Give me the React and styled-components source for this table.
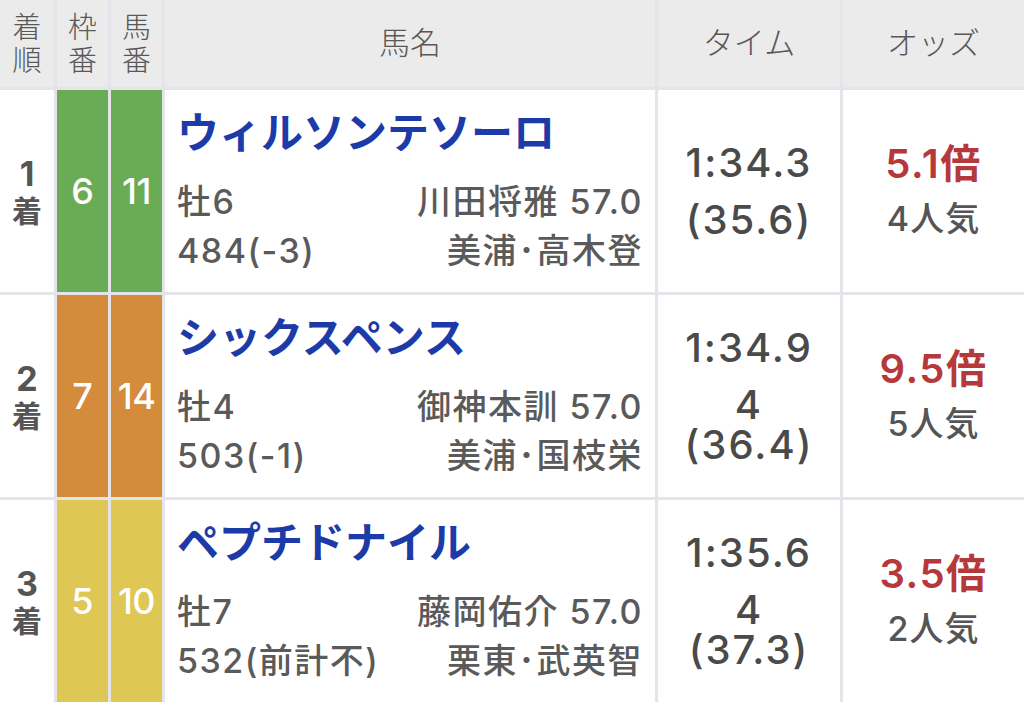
import React from "react";
import styled, { createGlobalStyle } from "styled-components";

const Global = createGlobalStyle`
  html, body { margin: 0; padding: 0; background: #fff; }
  body {
    width: 1024px;
    height: 702px;
    overflow: hidden;
    font-family: "Inter", "Noto Sans CJK JP", sans-serif;
    -webkit-font-smoothing: antialiased;
  }
`;

const Table = styled.div`
  display: grid;
  grid-template-columns: 54px 51px 51px 490px 182px 181px;
  grid-template-rows: 87px;
  grid-auto-rows: 202px;
  gap: 3px;
  background: #e4e4ea;
  width: 1024px;
`;

const HeadCell = styled.div`
  background: #ebebeb;
  color: #585858;
  font-family: "Noto Sans CJK JP", sans-serif;
  font-weight: 300;
  font-size: ${(p) => (p.$stack ? "29px" : "31px")};
  display: flex;
  flex-direction: column;
  align-items: center;
  justify-content: center;
  padding-bottom: ${(p) => (p.$stack ? "3px" : "7px")};
  line-height: ${(p) => (p.$stack ? "33px" : "1")};
  box-sizing: border-box;
`;

const HeadChar = styled.div`
  height: 33px;
  line-height: 33px;
  overflow: visible;
`;

const Cell = styled.div`
  background: #fff;
  display: flex;
  flex-direction: column;
  align-items: center;
  justify-content: center;
  box-sizing: border-box;
`;

const RankCell = styled(Cell)`
  color: #555;
`;

const RankNum = styled.div`
  font-family: "Inter", sans-serif;
  font-weight: 700;
  font-size: 34px;
  line-height: 36px;
  height: 36px;
`;

const RankSuffix = styled.div`
  font-family: "Noto Sans CJK JP", sans-serif;
  font-weight: 700;
  font-size: 30px;
  line-height: 34px;
  height: 34px;
`;

const FrameCell = styled(Cell)`
  background: ${(p) => p.$bg};
  color: #fff;
  font-size: 36px;
  font-weight: 500;
  letter-spacing: ${(p) => (p.$tight ? "-0.5px" : "0")};
`;

const NameCell = styled.div`
  background: #fff;
  padding: 10px 12px 0 12px;
  box-sizing: border-box;
  display: flex;
  flex-direction: column;
`;

const HorseName = styled.div`
  font-family: "Noto Sans CJK JP", sans-serif;
  font-weight: 700;
  font-size: 42px;
  line-height: 60px;
  color: #1c3aa8;
  white-space: nowrap;
`;

const InfoBlock = styled.div`
  margin-top: 17px;
  color: #5a5a5a;
  font-size: 34px;
  font-weight: 500;
  line-height: 49px;
  letter-spacing: 1.5px;
`;

const InfoLine = styled.div`
  display: flex;
  justify-content: space-between;
  white-space: nowrap;
`;

const TimeCell = styled(Cell)`
  color: #4a4a4a;
  font-size: 40px;
  font-weight: 500;
  line-height: 40px;
  letter-spacing: 2px;
`;

const TimeMain = styled.div``;

const TimeSub = styled.div`
  margin-top: 17px;
  text-align: center;
`;

const OddsCell = styled(Cell)`
  line-height: 55px;
`;

const Odds = styled.div`
  color: #b7383a;
  font-weight: 600;
  font-size: 40px;
  letter-spacing: 1.5px;
`;

const Pop = styled.div`
  color: #555;
  font-size: 34px;
  font-weight: 500;
  letter-spacing: 1px;
`;

const rows = [
  {
    rank: "1",
    frame: "6",
    num: "11",
    color: "#6aac56",
    name: "ウィルソンテソーロ",
    sex: "牡6",
    jockey: "川田将雅 57.0",
    weight: "484(-3)",
    trainer: "美浦･高木登",
    time: "1:34.3",
    sub: ["(35.6)"],
    odds: "5.1倍",
    pop: "4人気",
  },
  {
    rank: "2",
    frame: "7",
    num: "14",
    color: "#d58b3c",
    name: "シックスペンス",
    sex: "牡4",
    jockey: "御神本訓 57.0",
    weight: "503(-1)",
    trainer: "美浦･国枝栄",
    time: "1:34.9",
    sub: ["4", "(36.4)"],
    odds: "9.5倍",
    pop: "5人気",
  },
  {
    rank: "3",
    frame: "5",
    num: "10",
    color: "#dec755",
    name: "ペプチドナイル",
    sex: "牡7",
    jockey: "藤岡佑介 57.0",
    weight: "532(前計不)",
    trainer: "栗東･武英智",
    time: "1:35.6",
    sub: ["4", "(37.3)"],
    odds: "3.5倍",
    pop: "2人気",
  },
];

export default function App() {
  return (
    <>
      <Global />
      <Table>
        <HeadCell $stack>
          <HeadChar>着</HeadChar>
          <HeadChar>順</HeadChar>
        </HeadCell>
        <HeadCell $stack>
          <HeadChar>枠</HeadChar>
          <HeadChar>番</HeadChar>
        </HeadCell>
        <HeadCell $stack>
          <HeadChar>馬</HeadChar>
          <HeadChar>番</HeadChar>
        </HeadCell>
        <HeadCell>馬名</HeadCell>
        <HeadCell>タイム</HeadCell>
        <HeadCell>オッズ</HeadCell>

        {rows.map((r) => (
          <React.Fragment key={r.rank}>
            <RankCell>
              <RankNum>{r.rank}</RankNum>
              <RankSuffix>着</RankSuffix>
            </RankCell>
            <FrameCell $bg={r.color}>{r.frame}</FrameCell>
            <FrameCell $bg={r.color} $tight>
              {r.num}
            </FrameCell>
            <NameCell>
              <HorseName>{r.name}</HorseName>
              <InfoBlock>
                <InfoLine>
                  <span>{r.sex}</span>
                  <span>{r.jockey}</span>
                </InfoLine>
                <InfoLine>
                  <span>{r.weight}</span>
                  <span>{r.trainer}</span>
                </InfoLine>
              </InfoBlock>
            </NameCell>
            <TimeCell>
              <TimeMain>{r.time}</TimeMain>
              <TimeSub>
                {r.sub.map((s) => (
                  <div key={s}>{s}</div>
                ))}
              </TimeSub>
            </TimeCell>
            <OddsCell>
              <Odds>{r.odds}</Odds>
              <Pop>{r.pop}</Pop>
            </OddsCell>
          </React.Fragment>
        ))}
      </Table>
    </>
  );
}
